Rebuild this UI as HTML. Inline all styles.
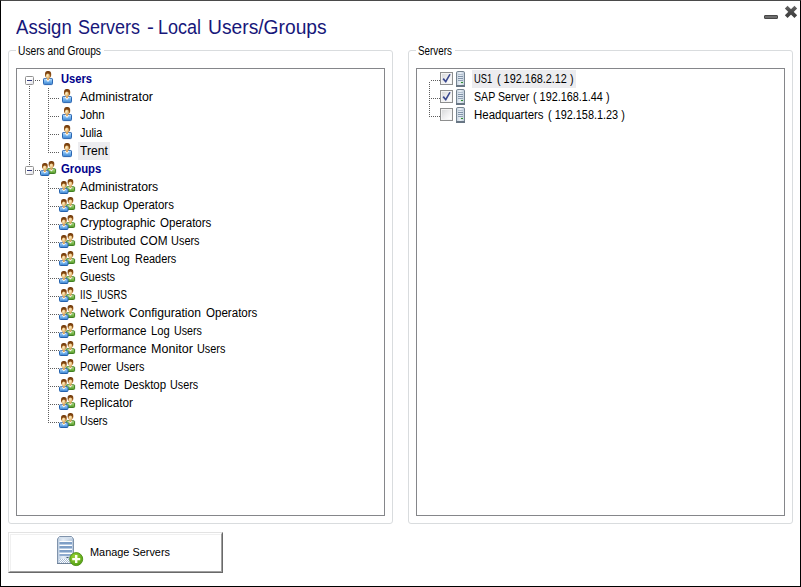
<!DOCTYPE html>
<html><head><meta charset="utf-8"><title>Assign Servers - Local Users/Groups</title>
<style>
html,body{margin:0;padding:0;background:#fff;}
body{width:801px;height:587px;position:relative;overflow:hidden;font-family:"Liberation Sans",sans-serif;}
#win{position:absolute;left:0;top:0;width:799px;height:585px;border:1px solid #000;border-top-color:#4a4a4a;background:#fff;}
.abs{position:absolute;}
.gb{position:absolute;border:1px solid #d9dcde;border-radius:3px;box-sizing:border-box;}
.gl{position:absolute;font-size:12px;line-height:14px;color:#000;white-space:nowrap;}
.tv{position:absolute;border:1px solid #85868a;box-sizing:border-box;background:#fff;}
.t,.gl,#title,#btxt{transform-origin:0 0;}
.t{position:absolute;white-space:nowrap;font-size:12px;line-height:16px;color:#000;}
.t.b{font-weight:bold;color:#00008b;}
.ic{position:absolute;display:block;overflow:visible;}
.hd{position:absolute;height:1px;background-image:linear-gradient(to right,#5c5c5c 1px,transparent 1px);background-size:2px 1px;}
.vd{position:absolute;width:1px;background-image:linear-gradient(to bottom,#5c5c5c 1px,transparent 1px);background-size:1px 2px;}
.sel{position:absolute;background:#ececef;}
.exp{position:absolute;width:7px;height:7px;border:1px solid #919191;border-radius:1.5px;background:linear-gradient(135deg,#fff 0%,#fff 40%,#dfdfe6 100%);}
.exp i{position:absolute;left:1px;top:3px;width:5px;height:1px;background:#323a7c;}
.cb{position:absolute;width:11px;height:11px;border:1px solid #8e8f8f;background:#f4f4f4;}
.cb b{position:absolute;left:1px;top:1px;width:9px;height:9px;background:linear-gradient(135deg,#d9dadb 0%,#eeeeef 50%,#fff 100%);}
#title{position:absolute;left:0;top:15px;font-size:20px;line-height:24px;color:#17177a;white-space:nowrap;}
.tt{position:absolute;top:0;transform-origin:0 0;white-space:nowrap;}
#btn{position:absolute;left:8px;top:532px;width:215px;height:41px;box-sizing:border-box;border:1px solid;border-color:#e3e3e3 #696969 #696969 #e3e3e3;background:#fff;}
#btn .in{position:absolute;left:0;top:0;right:0;bottom:0;border:1px solid;border-color:#fff #a0a0a0 #a0a0a0 #fff;}
#btn .in2{position:absolute;left:1px;top:1px;right:1px;bottom:1px;border:1px solid;border-color:#f0f0f0 #fff #fff #f0f0f0;}
#btxt{position:absolute;left:90px;top:546px;font-size:11px;line-height:13px;color:#000;white-space:nowrap;}
</style></head><body><div id="win"></div>

<div id="title">
<span class="tt" id="T0" style="left:15.5px;transform:scaleX(0.9279);">Assign</span> 
<span class="tt" id="T1" style="left:77.8px;transform:scaleX(0.8998);">Servers</span> 
<span class="tt" id="T2" style="left:146.8px;transform:scaleX(1.0347);">-</span> 
<span class="tt" id="T3" style="left:158.1px;transform:scaleX(0.9016);">Local</span> 
<span class="tt" id="T4" style="left:207.8px;transform:scaleX(0.9621);">Users/Groups</span> 
</div>
<svg class="ic" style="left:760px;top:2px" width="40" height="20" viewBox="0 0 40 20">
<rect x="4.5" y="13.5" width="13" height="3" rx="0.5" fill="#6e6e6e" stroke="#484848" stroke-width="1"/>
<defs><linearGradient id="xg" gradientUnits="userSpaceOnUse" x1="0" y1="3" x2="0" y2="17"><stop offset="0" stop-color="#6c6c6c"/><stop offset="0.5" stop-color="#484848"/><stop offset="1" stop-color="#3e3e3e"/></linearGradient></defs><path d="M26.2 5.1 L35.8 14.7 M35.8 5.1 L26.2 14.7" stroke="url(#xg)" stroke-width="3.8" fill="none"/>
</svg>
<div class="gb" style="left:8px;top:50px;width:385px;height:474px"></div>
<div class="abs" style="left:16px;top:48px;width:88px;height:5px;background:#fff"></div>
<div class="gl" id="gl1" style="left:18px;top:44px;transform:scaleX(0.8522);">Users and Groups</div>
<div class="tv" style="left:16px;top:68px;width:369px;height:448px"></div>
<div class="gb" style="left:408px;top:50px;width:385px;height:474px"></div>
<div class="abs" style="left:416px;top:48px;width:39px;height:5px;background:#fff"></div>
<div class="gl" id="gl2" style="left:418px;top:44px;transform:scaleX(0.8175);">Servers</div>
<div class="tv" style="left:416px;top:68px;width:369px;height:448px"></div>
<div class="vd" style="left:29px;top:86px;height:79px"></div>
<div class="vd" style="left:48px;top:88px;height:65px"></div>
<div class="vd" style="left:48px;top:178px;height:245px"></div>
<div class="exp" style="left:25px;top:76px"><i></i></div>
<div class="hd" style="left:35px;top:80px;width:5px"></div>
<svg class="ic" style="left:40px;top:70px" width="16" height="16" viewBox="0 0 16 16">
<defs><linearGradient id="ub0" x1="0" y1="0" x2="0" y2="1"><stop offset="0" stop-color="#b9dbf9"/><stop offset="0.5" stop-color="#72b2ed"/><stop offset="1" stop-color="#3a80cc"/></linearGradient>
<linearGradient id="uh0" x1="0" y1="0" x2="0" y2="1"><stop offset="0" stop-color="#6e3709"/><stop offset="1" stop-color="#a8641f"/></linearGradient>
<radialGradient id="uf0" cx="0.35" cy="0.35" r="0.75"><stop offset="0" stop-color="#fff3c8"/><stop offset="1" stop-color="#d39a52"/></radialGradient></defs>
<path d="M3.5 9.2 Q3.5 8.5 4.3 8.5 L11.7 8.5 Q12.5 8.5 12.5 9.2 L12.5 13.6 Q12.5 14.6 11.5 14.6 L4.5 14.6 Q3.5 14.6 3.5 13.6 Z" fill="url(#ub0)" stroke="#2b66b2" stroke-width="1"/>
<path d="M5.3 8.7 L10.7 8.7 L8 12 Z" fill="#f7fbff"/>
<path d="M6.9 7 L9.1 7 L9.1 9.4 L8 10.6 L6.9 9.4 Z" fill="#d9a55e"/>
<rect x="5" y="1" width="6.2" height="6.8" rx="2.7" ry="2.9" fill="url(#uh0)"/>
<ellipse cx="7.9" cy="6.2" rx="2.05" ry="2.6" fill="url(#uf0)"/>
</svg>
<span class="t b" id="L0" style="left:61px;top:71px;transform:scaleX(0.9293);">Users</span>
<div class="hd" style="left:50px;top:98px;width:9px"></div>
<svg class="ic" style="left:59px;top:88px" width="16" height="16" viewBox="0 0 16 16">
<defs><linearGradient id="ub1" x1="0" y1="0" x2="0" y2="1"><stop offset="0" stop-color="#b9dbf9"/><stop offset="0.5" stop-color="#72b2ed"/><stop offset="1" stop-color="#3a80cc"/></linearGradient>
<linearGradient id="uh1" x1="0" y1="0" x2="0" y2="1"><stop offset="0" stop-color="#6e3709"/><stop offset="1" stop-color="#a8641f"/></linearGradient>
<radialGradient id="uf1" cx="0.35" cy="0.35" r="0.75"><stop offset="0" stop-color="#fff3c8"/><stop offset="1" stop-color="#d39a52"/></radialGradient></defs>
<path d="M3.5 9.2 Q3.5 8.5 4.3 8.5 L11.7 8.5 Q12.5 8.5 12.5 9.2 L12.5 13.6 Q12.5 14.6 11.5 14.6 L4.5 14.6 Q3.5 14.6 3.5 13.6 Z" fill="url(#ub1)" stroke="#2b66b2" stroke-width="1"/>
<path d="M5.3 8.7 L10.7 8.7 L8 12 Z" fill="#f7fbff"/>
<path d="M6.9 7 L9.1 7 L9.1 9.4 L8 10.6 L6.9 9.4 Z" fill="#d9a55e"/>
<rect x="5" y="1" width="6.2" height="6.8" rx="2.7" ry="2.9" fill="url(#uh1)"/>
<ellipse cx="7.9" cy="6.2" rx="2.05" ry="2.6" fill="url(#uf1)"/>
</svg>
<span class="t " id="L1" style="left:80px;top:89px;transform:scaleX(1.0313);">Administrator</span>
<div class="hd" style="left:50px;top:116px;width:9px"></div>
<svg class="ic" style="left:59px;top:106px" width="16" height="16" viewBox="0 0 16 16">
<defs><linearGradient id="ub2" x1="0" y1="0" x2="0" y2="1"><stop offset="0" stop-color="#b9dbf9"/><stop offset="0.5" stop-color="#72b2ed"/><stop offset="1" stop-color="#3a80cc"/></linearGradient>
<linearGradient id="uh2" x1="0" y1="0" x2="0" y2="1"><stop offset="0" stop-color="#6e3709"/><stop offset="1" stop-color="#a8641f"/></linearGradient>
<radialGradient id="uf2" cx="0.35" cy="0.35" r="0.75"><stop offset="0" stop-color="#fff3c8"/><stop offset="1" stop-color="#d39a52"/></radialGradient></defs>
<path d="M3.5 9.2 Q3.5 8.5 4.3 8.5 L11.7 8.5 Q12.5 8.5 12.5 9.2 L12.5 13.6 Q12.5 14.6 11.5 14.6 L4.5 14.6 Q3.5 14.6 3.5 13.6 Z" fill="url(#ub2)" stroke="#2b66b2" stroke-width="1"/>
<path d="M5.3 8.7 L10.7 8.7 L8 12 Z" fill="#f7fbff"/>
<path d="M6.9 7 L9.1 7 L9.1 9.4 L8 10.6 L6.9 9.4 Z" fill="#d9a55e"/>
<rect x="5" y="1" width="6.2" height="6.8" rx="2.7" ry="2.9" fill="url(#uh2)"/>
<ellipse cx="7.9" cy="6.2" rx="2.05" ry="2.6" fill="url(#uf2)"/>
</svg>
<span class="t " id="L2" style="left:80px;top:107px;transform:scaleX(0.9489);">John</span>
<div class="hd" style="left:50px;top:134px;width:9px"></div>
<svg class="ic" style="left:59px;top:124px" width="16" height="16" viewBox="0 0 16 16">
<defs><linearGradient id="ub3" x1="0" y1="0" x2="0" y2="1"><stop offset="0" stop-color="#b9dbf9"/><stop offset="0.5" stop-color="#72b2ed"/><stop offset="1" stop-color="#3a80cc"/></linearGradient>
<linearGradient id="uh3" x1="0" y1="0" x2="0" y2="1"><stop offset="0" stop-color="#6e3709"/><stop offset="1" stop-color="#a8641f"/></linearGradient>
<radialGradient id="uf3" cx="0.35" cy="0.35" r="0.75"><stop offset="0" stop-color="#fff3c8"/><stop offset="1" stop-color="#d39a52"/></radialGradient></defs>
<path d="M3.5 9.2 Q3.5 8.5 4.3 8.5 L11.7 8.5 Q12.5 8.5 12.5 9.2 L12.5 13.6 Q12.5 14.6 11.5 14.6 L4.5 14.6 Q3.5 14.6 3.5 13.6 Z" fill="url(#ub3)" stroke="#2b66b2" stroke-width="1"/>
<path d="M5.3 8.7 L10.7 8.7 L8 12 Z" fill="#f7fbff"/>
<path d="M6.9 7 L9.1 7 L9.1 9.4 L8 10.6 L6.9 9.4 Z" fill="#d9a55e"/>
<rect x="5" y="1" width="6.2" height="6.8" rx="2.7" ry="2.9" fill="url(#uh3)"/>
<ellipse cx="7.9" cy="6.2" rx="2.05" ry="2.6" fill="url(#uf3)"/>
</svg>
<span class="t " id="L3" style="left:80px;top:125px;transform:scaleX(0.9033);">Julia</span>
<div class="hd" style="left:50px;top:152px;width:9px"></div>
<svg class="ic" style="left:59px;top:142px" width="16" height="16" viewBox="0 0 16 16">
<defs><linearGradient id="ub4" x1="0" y1="0" x2="0" y2="1"><stop offset="0" stop-color="#b9dbf9"/><stop offset="0.5" stop-color="#72b2ed"/><stop offset="1" stop-color="#3a80cc"/></linearGradient>
<linearGradient id="uh4" x1="0" y1="0" x2="0" y2="1"><stop offset="0" stop-color="#6e3709"/><stop offset="1" stop-color="#a8641f"/></linearGradient>
<radialGradient id="uf4" cx="0.35" cy="0.35" r="0.75"><stop offset="0" stop-color="#fff3c8"/><stop offset="1" stop-color="#d39a52"/></radialGradient></defs>
<path d="M3.5 9.2 Q3.5 8.5 4.3 8.5 L11.7 8.5 Q12.5 8.5 12.5 9.2 L12.5 13.6 Q12.5 14.6 11.5 14.6 L4.5 14.6 Q3.5 14.6 3.5 13.6 Z" fill="url(#ub4)" stroke="#2b66b2" stroke-width="1"/>
<path d="M5.3 8.7 L10.7 8.7 L8 12 Z" fill="#f7fbff"/>
<path d="M6.9 7 L9.1 7 L9.1 9.4 L8 10.6 L6.9 9.4 Z" fill="#d9a55e"/>
<rect x="5" y="1" width="6.2" height="6.8" rx="2.7" ry="2.9" fill="url(#uh4)"/>
<ellipse cx="7.9" cy="6.2" rx="2.05" ry="2.6" fill="url(#uf4)"/>
</svg>
<div class="sel" style="left:78px;top:142px;width:32px;height:18px"></div>
<span class="t " id="L4" style="left:80px;top:143px;transform:scaleX(1.0086);">Trent</span>
<div class="exp" style="left:25px;top:166px"><i></i></div>
<div class="hd" style="left:35px;top:170px;width:5px"></div>
<svg class="ic" style="left:40px;top:160px" width="16" height="16" viewBox="0 0 16 16">
<defs><linearGradient id="gb5" x1="0" y1="0" x2="0" y2="1"><stop offset="0" stop-color="#b9dbf9"/><stop offset="0.5" stop-color="#72b2ed"/><stop offset="1" stop-color="#3a80cc"/></linearGradient>
<linearGradient id="gg5" x1="0" y1="0" x2="0" y2="1"><stop offset="0" stop-color="#b4dc8a"/><stop offset="0.55" stop-color="#7dba4c"/><stop offset="1" stop-color="#4d8f26"/></linearGradient>
<linearGradient id="gh5" x1="0" y1="0" x2="0" y2="1"><stop offset="0" stop-color="#6e3709"/><stop offset="1" stop-color="#a8641f"/></linearGradient>
<radialGradient id="gf5" cx="0.4" cy="0.35" r="0.7"><stop offset="0" stop-color="#fdeec0"/><stop offset="1" stop-color="#d9a45c"/></radialGradient></defs>
<g transform="translate(6.6 1.0)">
<path d="M0.5 8.5 Q0.5 7.8 1.3 7.8 L8.2 7.8 Q9 7.8 9 8.5 L9 11.5 Q9 12.5 8 12.5 L1.5 12.5 Q0.5 12.5 0.5 11.5 Z" fill="url(#gg5)" stroke="#3f7f22" stroke-width="1"/>
<path d="M2.5 7.9 L7.1 7.9 L4.8 10.4 Z" fill="#f6fbff"/>
<path d="M3.8 5.6 L5.8 5.6 L5.8 8.3 L4.8 9.3 L3.8 8.3 Z" fill="#d9a55e"/>
<rect x="2" y="0" width="5.7" height="6.2" rx="2.5" ry="2.7" fill="url(#gh5)"/>
<ellipse cx="4.8" cy="5.0" rx="1.95" ry="2.6" fill="url(#gf5)"/>
</g>
<g transform="translate(0.0 3.0)">
<path d="M0.5 8.5 Q0.5 7.8 1.3 7.8 L8.2 7.8 Q9 7.8 9 8.5 L9 11.5 Q9 12.5 8 12.5 L1.5 12.5 Q0.5 12.5 0.5 11.5 Z" fill="url(#gb5)" stroke="#2562ae" stroke-width="1"/>
<path d="M2.5 7.9 L7.1 7.9 L4.8 10.4 Z" fill="#f6fbff"/>
<path d="M3.8 5.6 L5.8 5.6 L5.8 8.3 L4.8 9.3 L3.8 8.3 Z" fill="#d9a55e"/>
<rect x="2" y="0" width="5.7" height="6.2" rx="2.5" ry="2.7" fill="url(#gh5)"/>
<ellipse cx="4.8" cy="5.0" rx="1.95" ry="2.6" fill="url(#gf5)"/>
</g>
</svg>
<span class="t b" id="L5" style="left:61px;top:161px;transform:scaleX(0.9444);">Groups</span>
<div class="hd" style="left:50px;top:188px;width:9px"></div>
<svg class="ic" style="left:59px;top:178px" width="16" height="16" viewBox="0 0 16 16">
<defs><linearGradient id="gb6" x1="0" y1="0" x2="0" y2="1"><stop offset="0" stop-color="#b9dbf9"/><stop offset="0.5" stop-color="#72b2ed"/><stop offset="1" stop-color="#3a80cc"/></linearGradient>
<linearGradient id="gg6" x1="0" y1="0" x2="0" y2="1"><stop offset="0" stop-color="#b4dc8a"/><stop offset="0.55" stop-color="#7dba4c"/><stop offset="1" stop-color="#4d8f26"/></linearGradient>
<linearGradient id="gh6" x1="0" y1="0" x2="0" y2="1"><stop offset="0" stop-color="#6e3709"/><stop offset="1" stop-color="#a8641f"/></linearGradient>
<radialGradient id="gf6" cx="0.4" cy="0.35" r="0.7"><stop offset="0" stop-color="#fdeec0"/><stop offset="1" stop-color="#d9a45c"/></radialGradient></defs>
<g transform="translate(6.6 1.0)">
<path d="M0.5 8.5 Q0.5 7.8 1.3 7.8 L8.2 7.8 Q9 7.8 9 8.5 L9 11.5 Q9 12.5 8 12.5 L1.5 12.5 Q0.5 12.5 0.5 11.5 Z" fill="url(#gg6)" stroke="#3f7f22" stroke-width="1"/>
<path d="M2.5 7.9 L7.1 7.9 L4.8 10.4 Z" fill="#f6fbff"/>
<path d="M3.8 5.6 L5.8 5.6 L5.8 8.3 L4.8 9.3 L3.8 8.3 Z" fill="#d9a55e"/>
<rect x="2" y="0" width="5.7" height="6.2" rx="2.5" ry="2.7" fill="url(#gh6)"/>
<ellipse cx="4.8" cy="5.0" rx="1.95" ry="2.6" fill="url(#gf6)"/>
</g>
<g transform="translate(0.0 3.0)">
<path d="M0.5 8.5 Q0.5 7.8 1.3 7.8 L8.2 7.8 Q9 7.8 9 8.5 L9 11.5 Q9 12.5 8 12.5 L1.5 12.5 Q0.5 12.5 0.5 11.5 Z" fill="url(#gb6)" stroke="#2562ae" stroke-width="1"/>
<path d="M2.5 7.9 L7.1 7.9 L4.8 10.4 Z" fill="#f6fbff"/>
<path d="M3.8 5.6 L5.8 5.6 L5.8 8.3 L4.8 9.3 L3.8 8.3 Z" fill="#d9a55e"/>
<rect x="2" y="0" width="5.7" height="6.2" rx="2.5" ry="2.7" fill="url(#gh6)"/>
<ellipse cx="4.8" cy="5.0" rx="1.95" ry="2.6" fill="url(#gf6)"/>
</g>
</svg>
<span class="t " id="L6" style="left:80px;top:179px;transform:scaleX(1.0197);">Administrators</span>
<div class="hd" style="left:50px;top:206px;width:9px"></div>
<svg class="ic" style="left:59px;top:196px" width="16" height="16" viewBox="0 0 16 16">
<defs><linearGradient id="gb7" x1="0" y1="0" x2="0" y2="1"><stop offset="0" stop-color="#b9dbf9"/><stop offset="0.5" stop-color="#72b2ed"/><stop offset="1" stop-color="#3a80cc"/></linearGradient>
<linearGradient id="gg7" x1="0" y1="0" x2="0" y2="1"><stop offset="0" stop-color="#b4dc8a"/><stop offset="0.55" stop-color="#7dba4c"/><stop offset="1" stop-color="#4d8f26"/></linearGradient>
<linearGradient id="gh7" x1="0" y1="0" x2="0" y2="1"><stop offset="0" stop-color="#6e3709"/><stop offset="1" stop-color="#a8641f"/></linearGradient>
<radialGradient id="gf7" cx="0.4" cy="0.35" r="0.7"><stop offset="0" stop-color="#fdeec0"/><stop offset="1" stop-color="#d9a45c"/></radialGradient></defs>
<g transform="translate(6.6 1.0)">
<path d="M0.5 8.5 Q0.5 7.8 1.3 7.8 L8.2 7.8 Q9 7.8 9 8.5 L9 11.5 Q9 12.5 8 12.5 L1.5 12.5 Q0.5 12.5 0.5 11.5 Z" fill="url(#gg7)" stroke="#3f7f22" stroke-width="1"/>
<path d="M2.5 7.9 L7.1 7.9 L4.8 10.4 Z" fill="#f6fbff"/>
<path d="M3.8 5.6 L5.8 5.6 L5.8 8.3 L4.8 9.3 L3.8 8.3 Z" fill="#d9a55e"/>
<rect x="2" y="0" width="5.7" height="6.2" rx="2.5" ry="2.7" fill="url(#gh7)"/>
<ellipse cx="4.8" cy="5.0" rx="1.95" ry="2.6" fill="url(#gf7)"/>
</g>
<g transform="translate(0.0 3.0)">
<path d="M0.5 8.5 Q0.5 7.8 1.3 7.8 L8.2 7.8 Q9 7.8 9 8.5 L9 11.5 Q9 12.5 8 12.5 L1.5 12.5 Q0.5 12.5 0.5 11.5 Z" fill="url(#gb7)" stroke="#2562ae" stroke-width="1"/>
<path d="M2.5 7.9 L7.1 7.9 L4.8 10.4 Z" fill="#f6fbff"/>
<path d="M3.8 5.6 L5.8 5.6 L5.8 8.3 L4.8 9.3 L3.8 8.3 Z" fill="#d9a55e"/>
<rect x="2" y="0" width="5.7" height="6.2" rx="2.5" ry="2.7" fill="url(#gh7)"/>
<ellipse cx="4.8" cy="5.0" rx="1.95" ry="2.6" fill="url(#gf7)"/>
</g>
</svg>
<span class="t " id="L7_0" style="left:80px;top:197px;transform:scaleX(0.9642);">Backup</span>
<span class="t " id="L7_1" style="left:123.2px;top:197px;transform:scaleX(0.9541);">Operators</span>
<div class="hd" style="left:50px;top:224px;width:9px"></div>
<svg class="ic" style="left:59px;top:214px" width="16" height="16" viewBox="0 0 16 16">
<defs><linearGradient id="gb8" x1="0" y1="0" x2="0" y2="1"><stop offset="0" stop-color="#b9dbf9"/><stop offset="0.5" stop-color="#72b2ed"/><stop offset="1" stop-color="#3a80cc"/></linearGradient>
<linearGradient id="gg8" x1="0" y1="0" x2="0" y2="1"><stop offset="0" stop-color="#b4dc8a"/><stop offset="0.55" stop-color="#7dba4c"/><stop offset="1" stop-color="#4d8f26"/></linearGradient>
<linearGradient id="gh8" x1="0" y1="0" x2="0" y2="1"><stop offset="0" stop-color="#6e3709"/><stop offset="1" stop-color="#a8641f"/></linearGradient>
<radialGradient id="gf8" cx="0.4" cy="0.35" r="0.7"><stop offset="0" stop-color="#fdeec0"/><stop offset="1" stop-color="#d9a45c"/></radialGradient></defs>
<g transform="translate(6.6 1.0)">
<path d="M0.5 8.5 Q0.5 7.8 1.3 7.8 L8.2 7.8 Q9 7.8 9 8.5 L9 11.5 Q9 12.5 8 12.5 L1.5 12.5 Q0.5 12.5 0.5 11.5 Z" fill="url(#gg8)" stroke="#3f7f22" stroke-width="1"/>
<path d="M2.5 7.9 L7.1 7.9 L4.8 10.4 Z" fill="#f6fbff"/>
<path d="M3.8 5.6 L5.8 5.6 L5.8 8.3 L4.8 9.3 L3.8 8.3 Z" fill="#d9a55e"/>
<rect x="2" y="0" width="5.7" height="6.2" rx="2.5" ry="2.7" fill="url(#gh8)"/>
<ellipse cx="4.8" cy="5.0" rx="1.95" ry="2.6" fill="url(#gf8)"/>
</g>
<g transform="translate(0.0 3.0)">
<path d="M0.5 8.5 Q0.5 7.8 1.3 7.8 L8.2 7.8 Q9 7.8 9 8.5 L9 11.5 Q9 12.5 8 12.5 L1.5 12.5 Q0.5 12.5 0.5 11.5 Z" fill="url(#gb8)" stroke="#2562ae" stroke-width="1"/>
<path d="M2.5 7.9 L7.1 7.9 L4.8 10.4 Z" fill="#f6fbff"/>
<path d="M3.8 5.6 L5.8 5.6 L5.8 8.3 L4.8 9.3 L3.8 8.3 Z" fill="#d9a55e"/>
<rect x="2" y="0" width="5.7" height="6.2" rx="2.5" ry="2.7" fill="url(#gh8)"/>
<ellipse cx="4.8" cy="5.0" rx="1.95" ry="2.6" fill="url(#gf8)"/>
</g>
</svg>
<span class="t " id="L8_0" style="left:80px;top:215px;transform:scaleX(1.0093);">Cryptographic</span>
<span class="t " id="L8_1" style="left:159.8px;top:215px;transform:scaleX(0.9633);">Operators</span>
<div class="hd" style="left:50px;top:242px;width:9px"></div>
<svg class="ic" style="left:59px;top:232px" width="16" height="16" viewBox="0 0 16 16">
<defs><linearGradient id="gb9" x1="0" y1="0" x2="0" y2="1"><stop offset="0" stop-color="#b9dbf9"/><stop offset="0.5" stop-color="#72b2ed"/><stop offset="1" stop-color="#3a80cc"/></linearGradient>
<linearGradient id="gg9" x1="0" y1="0" x2="0" y2="1"><stop offset="0" stop-color="#b4dc8a"/><stop offset="0.55" stop-color="#7dba4c"/><stop offset="1" stop-color="#4d8f26"/></linearGradient>
<linearGradient id="gh9" x1="0" y1="0" x2="0" y2="1"><stop offset="0" stop-color="#6e3709"/><stop offset="1" stop-color="#a8641f"/></linearGradient>
<radialGradient id="gf9" cx="0.4" cy="0.35" r="0.7"><stop offset="0" stop-color="#fdeec0"/><stop offset="1" stop-color="#d9a45c"/></radialGradient></defs>
<g transform="translate(6.6 1.0)">
<path d="M0.5 8.5 Q0.5 7.8 1.3 7.8 L8.2 7.8 Q9 7.8 9 8.5 L9 11.5 Q9 12.5 8 12.5 L1.5 12.5 Q0.5 12.5 0.5 11.5 Z" fill="url(#gg9)" stroke="#3f7f22" stroke-width="1"/>
<path d="M2.5 7.9 L7.1 7.9 L4.8 10.4 Z" fill="#f6fbff"/>
<path d="M3.8 5.6 L5.8 5.6 L5.8 8.3 L4.8 9.3 L3.8 8.3 Z" fill="#d9a55e"/>
<rect x="2" y="0" width="5.7" height="6.2" rx="2.5" ry="2.7" fill="url(#gh9)"/>
<ellipse cx="4.8" cy="5.0" rx="1.95" ry="2.6" fill="url(#gf9)"/>
</g>
<g transform="translate(0.0 3.0)">
<path d="M0.5 8.5 Q0.5 7.8 1.3 7.8 L8.2 7.8 Q9 7.8 9 8.5 L9 11.5 Q9 12.5 8 12.5 L1.5 12.5 Q0.5 12.5 0.5 11.5 Z" fill="url(#gb9)" stroke="#2562ae" stroke-width="1"/>
<path d="M2.5 7.9 L7.1 7.9 L4.8 10.4 Z" fill="#f6fbff"/>
<path d="M3.8 5.6 L5.8 5.6 L5.8 8.3 L4.8 9.3 L3.8 8.3 Z" fill="#d9a55e"/>
<rect x="2" y="0" width="5.7" height="6.2" rx="2.5" ry="2.7" fill="url(#gh9)"/>
<ellipse cx="4.8" cy="5.0" rx="1.95" ry="2.6" fill="url(#gf9)"/>
</g>
</svg>
<span class="t " id="L9_0" style="left:80px;top:233px;transform:scaleX(0.9693);">Distributed</span>
<span class="t " id="L9_1" style="left:139.7px;top:233px;transform:scaleX(0.9826);">COM</span>
<span class="t " id="L9_2" style="left:171.0px;top:233px;transform:scaleX(0.9125);">Users</span>
<div class="hd" style="left:50px;top:260px;width:9px"></div>
<svg class="ic" style="left:59px;top:250px" width="16" height="16" viewBox="0 0 16 16">
<defs><linearGradient id="gb10" x1="0" y1="0" x2="0" y2="1"><stop offset="0" stop-color="#b9dbf9"/><stop offset="0.5" stop-color="#72b2ed"/><stop offset="1" stop-color="#3a80cc"/></linearGradient>
<linearGradient id="gg10" x1="0" y1="0" x2="0" y2="1"><stop offset="0" stop-color="#b4dc8a"/><stop offset="0.55" stop-color="#7dba4c"/><stop offset="1" stop-color="#4d8f26"/></linearGradient>
<linearGradient id="gh10" x1="0" y1="0" x2="0" y2="1"><stop offset="0" stop-color="#6e3709"/><stop offset="1" stop-color="#a8641f"/></linearGradient>
<radialGradient id="gf10" cx="0.4" cy="0.35" r="0.7"><stop offset="0" stop-color="#fdeec0"/><stop offset="1" stop-color="#d9a45c"/></radialGradient></defs>
<g transform="translate(6.6 1.0)">
<path d="M0.5 8.5 Q0.5 7.8 1.3 7.8 L8.2 7.8 Q9 7.8 9 8.5 L9 11.5 Q9 12.5 8 12.5 L1.5 12.5 Q0.5 12.5 0.5 11.5 Z" fill="url(#gg10)" stroke="#3f7f22" stroke-width="1"/>
<path d="M2.5 7.9 L7.1 7.9 L4.8 10.4 Z" fill="#f6fbff"/>
<path d="M3.8 5.6 L5.8 5.6 L5.8 8.3 L4.8 9.3 L3.8 8.3 Z" fill="#d9a55e"/>
<rect x="2" y="0" width="5.7" height="6.2" rx="2.5" ry="2.7" fill="url(#gh10)"/>
<ellipse cx="4.8" cy="5.0" rx="1.95" ry="2.6" fill="url(#gf10)"/>
</g>
<g transform="translate(0.0 3.0)">
<path d="M0.5 8.5 Q0.5 7.8 1.3 7.8 L8.2 7.8 Q9 7.8 9 8.5 L9 11.5 Q9 12.5 8 12.5 L1.5 12.5 Q0.5 12.5 0.5 11.5 Z" fill="url(#gb10)" stroke="#2562ae" stroke-width="1"/>
<path d="M2.5 7.9 L7.1 7.9 L4.8 10.4 Z" fill="#f6fbff"/>
<path d="M3.8 5.6 L5.8 5.6 L5.8 8.3 L4.8 9.3 L3.8 8.3 Z" fill="#d9a55e"/>
<rect x="2" y="0" width="5.7" height="6.2" rx="2.5" ry="2.7" fill="url(#gh10)"/>
<ellipse cx="4.8" cy="5.0" rx="1.95" ry="2.6" fill="url(#gf10)"/>
</g>
</svg>
<span class="t " id="L10_0" style="left:80px;top:251px;transform:scaleX(0.8929);">Event</span>
<span class="t " id="L10_1" style="left:111.4px;top:251px;transform:scaleX(0.9390);">Log</span>
<span class="t " id="L10_2" style="left:134.7px;top:251px;transform:scaleX(0.9108);">Readers</span>
<div class="hd" style="left:50px;top:278px;width:9px"></div>
<svg class="ic" style="left:59px;top:268px" width="16" height="16" viewBox="0 0 16 16">
<defs><linearGradient id="gb11" x1="0" y1="0" x2="0" y2="1"><stop offset="0" stop-color="#b9dbf9"/><stop offset="0.5" stop-color="#72b2ed"/><stop offset="1" stop-color="#3a80cc"/></linearGradient>
<linearGradient id="gg11" x1="0" y1="0" x2="0" y2="1"><stop offset="0" stop-color="#b4dc8a"/><stop offset="0.55" stop-color="#7dba4c"/><stop offset="1" stop-color="#4d8f26"/></linearGradient>
<linearGradient id="gh11" x1="0" y1="0" x2="0" y2="1"><stop offset="0" stop-color="#6e3709"/><stop offset="1" stop-color="#a8641f"/></linearGradient>
<radialGradient id="gf11" cx="0.4" cy="0.35" r="0.7"><stop offset="0" stop-color="#fdeec0"/><stop offset="1" stop-color="#d9a45c"/></radialGradient></defs>
<g transform="translate(6.6 1.0)">
<path d="M0.5 8.5 Q0.5 7.8 1.3 7.8 L8.2 7.8 Q9 7.8 9 8.5 L9 11.5 Q9 12.5 8 12.5 L1.5 12.5 Q0.5 12.5 0.5 11.5 Z" fill="url(#gg11)" stroke="#3f7f22" stroke-width="1"/>
<path d="M2.5 7.9 L7.1 7.9 L4.8 10.4 Z" fill="#f6fbff"/>
<path d="M3.8 5.6 L5.8 5.6 L5.8 8.3 L4.8 9.3 L3.8 8.3 Z" fill="#d9a55e"/>
<rect x="2" y="0" width="5.7" height="6.2" rx="2.5" ry="2.7" fill="url(#gh11)"/>
<ellipse cx="4.8" cy="5.0" rx="1.95" ry="2.6" fill="url(#gf11)"/>
</g>
<g transform="translate(0.0 3.0)">
<path d="M0.5 8.5 Q0.5 7.8 1.3 7.8 L8.2 7.8 Q9 7.8 9 8.5 L9 11.5 Q9 12.5 8 12.5 L1.5 12.5 Q0.5 12.5 0.5 11.5 Z" fill="url(#gb11)" stroke="#2562ae" stroke-width="1"/>
<path d="M2.5 7.9 L7.1 7.9 L4.8 10.4 Z" fill="#f6fbff"/>
<path d="M3.8 5.6 L5.8 5.6 L5.8 8.3 L4.8 9.3 L3.8 8.3 Z" fill="#d9a55e"/>
<rect x="2" y="0" width="5.7" height="6.2" rx="2.5" ry="2.7" fill="url(#gh11)"/>
<ellipse cx="4.8" cy="5.0" rx="1.95" ry="2.6" fill="url(#gf11)"/>
</g>
</svg>
<span class="t " id="L11" style="left:80px;top:269px;transform:scaleX(0.9207);">Guests</span>
<div class="hd" style="left:50px;top:296px;width:9px"></div>
<svg class="ic" style="left:59px;top:286px" width="16" height="16" viewBox="0 0 16 16">
<defs><linearGradient id="gb12" x1="0" y1="0" x2="0" y2="1"><stop offset="0" stop-color="#b9dbf9"/><stop offset="0.5" stop-color="#72b2ed"/><stop offset="1" stop-color="#3a80cc"/></linearGradient>
<linearGradient id="gg12" x1="0" y1="0" x2="0" y2="1"><stop offset="0" stop-color="#b4dc8a"/><stop offset="0.55" stop-color="#7dba4c"/><stop offset="1" stop-color="#4d8f26"/></linearGradient>
<linearGradient id="gh12" x1="0" y1="0" x2="0" y2="1"><stop offset="0" stop-color="#6e3709"/><stop offset="1" stop-color="#a8641f"/></linearGradient>
<radialGradient id="gf12" cx="0.4" cy="0.35" r="0.7"><stop offset="0" stop-color="#fdeec0"/><stop offset="1" stop-color="#d9a45c"/></radialGradient></defs>
<g transform="translate(6.6 1.0)">
<path d="M0.5 8.5 Q0.5 7.8 1.3 7.8 L8.2 7.8 Q9 7.8 9 8.5 L9 11.5 Q9 12.5 8 12.5 L1.5 12.5 Q0.5 12.5 0.5 11.5 Z" fill="url(#gg12)" stroke="#3f7f22" stroke-width="1"/>
<path d="M2.5 7.9 L7.1 7.9 L4.8 10.4 Z" fill="#f6fbff"/>
<path d="M3.8 5.6 L5.8 5.6 L5.8 8.3 L4.8 9.3 L3.8 8.3 Z" fill="#d9a55e"/>
<rect x="2" y="0" width="5.7" height="6.2" rx="2.5" ry="2.7" fill="url(#gh12)"/>
<ellipse cx="4.8" cy="5.0" rx="1.95" ry="2.6" fill="url(#gf12)"/>
</g>
<g transform="translate(0.0 3.0)">
<path d="M0.5 8.5 Q0.5 7.8 1.3 7.8 L8.2 7.8 Q9 7.8 9 8.5 L9 11.5 Q9 12.5 8 12.5 L1.5 12.5 Q0.5 12.5 0.5 11.5 Z" fill="url(#gb12)" stroke="#2562ae" stroke-width="1"/>
<path d="M2.5 7.9 L7.1 7.9 L4.8 10.4 Z" fill="#f6fbff"/>
<path d="M3.8 5.6 L5.8 5.6 L5.8 8.3 L4.8 9.3 L3.8 8.3 Z" fill="#d9a55e"/>
<rect x="2" y="0" width="5.7" height="6.2" rx="2.5" ry="2.7" fill="url(#gh12)"/>
<ellipse cx="4.8" cy="5.0" rx="1.95" ry="2.6" fill="url(#gf12)"/>
</g>
</svg>
<span class="t " id="L12" style="left:80px;top:287px;transform:scaleX(0.8082);">IIS_IUSRS</span>
<div class="hd" style="left:50px;top:314px;width:9px"></div>
<svg class="ic" style="left:59px;top:304px" width="16" height="16" viewBox="0 0 16 16">
<defs><linearGradient id="gb13" x1="0" y1="0" x2="0" y2="1"><stop offset="0" stop-color="#b9dbf9"/><stop offset="0.5" stop-color="#72b2ed"/><stop offset="1" stop-color="#3a80cc"/></linearGradient>
<linearGradient id="gg13" x1="0" y1="0" x2="0" y2="1"><stop offset="0" stop-color="#b4dc8a"/><stop offset="0.55" stop-color="#7dba4c"/><stop offset="1" stop-color="#4d8f26"/></linearGradient>
<linearGradient id="gh13" x1="0" y1="0" x2="0" y2="1"><stop offset="0" stop-color="#6e3709"/><stop offset="1" stop-color="#a8641f"/></linearGradient>
<radialGradient id="gf13" cx="0.4" cy="0.35" r="0.7"><stop offset="0" stop-color="#fdeec0"/><stop offset="1" stop-color="#d9a45c"/></radialGradient></defs>
<g transform="translate(6.6 1.0)">
<path d="M0.5 8.5 Q0.5 7.8 1.3 7.8 L8.2 7.8 Q9 7.8 9 8.5 L9 11.5 Q9 12.5 8 12.5 L1.5 12.5 Q0.5 12.5 0.5 11.5 Z" fill="url(#gg13)" stroke="#3f7f22" stroke-width="1"/>
<path d="M2.5 7.9 L7.1 7.9 L4.8 10.4 Z" fill="#f6fbff"/>
<path d="M3.8 5.6 L5.8 5.6 L5.8 8.3 L4.8 9.3 L3.8 8.3 Z" fill="#d9a55e"/>
<rect x="2" y="0" width="5.7" height="6.2" rx="2.5" ry="2.7" fill="url(#gh13)"/>
<ellipse cx="4.8" cy="5.0" rx="1.95" ry="2.6" fill="url(#gf13)"/>
</g>
<g transform="translate(0.0 3.0)">
<path d="M0.5 8.5 Q0.5 7.8 1.3 7.8 L8.2 7.8 Q9 7.8 9 8.5 L9 11.5 Q9 12.5 8 12.5 L1.5 12.5 Q0.5 12.5 0.5 11.5 Z" fill="url(#gb13)" stroke="#2562ae" stroke-width="1"/>
<path d="M2.5 7.9 L7.1 7.9 L4.8 10.4 Z" fill="#f6fbff"/>
<path d="M3.8 5.6 L5.8 5.6 L5.8 8.3 L4.8 9.3 L3.8 8.3 Z" fill="#d9a55e"/>
<rect x="2" y="0" width="5.7" height="6.2" rx="2.5" ry="2.7" fill="url(#gh13)"/>
<ellipse cx="4.8" cy="5.0" rx="1.95" ry="2.6" fill="url(#gf13)"/>
</g>
</svg>
<span class="t " id="L13_0" style="left:80px;top:305px;transform:scaleX(1.0155);">Network</span>
<span class="t " id="L13_1" style="left:129.0px;top:305px;transform:scaleX(1.0085);">Configuration</span>
<span class="t " id="L13_2" style="left:205.6px;top:305px;transform:scaleX(0.9634);">Operators</span>
<div class="hd" style="left:50px;top:332px;width:9px"></div>
<svg class="ic" style="left:59px;top:322px" width="16" height="16" viewBox="0 0 16 16">
<defs><linearGradient id="gb14" x1="0" y1="0" x2="0" y2="1"><stop offset="0" stop-color="#b9dbf9"/><stop offset="0.5" stop-color="#72b2ed"/><stop offset="1" stop-color="#3a80cc"/></linearGradient>
<linearGradient id="gg14" x1="0" y1="0" x2="0" y2="1"><stop offset="0" stop-color="#b4dc8a"/><stop offset="0.55" stop-color="#7dba4c"/><stop offset="1" stop-color="#4d8f26"/></linearGradient>
<linearGradient id="gh14" x1="0" y1="0" x2="0" y2="1"><stop offset="0" stop-color="#6e3709"/><stop offset="1" stop-color="#a8641f"/></linearGradient>
<radialGradient id="gf14" cx="0.4" cy="0.35" r="0.7"><stop offset="0" stop-color="#fdeec0"/><stop offset="1" stop-color="#d9a45c"/></radialGradient></defs>
<g transform="translate(6.6 1.0)">
<path d="M0.5 8.5 Q0.5 7.8 1.3 7.8 L8.2 7.8 Q9 7.8 9 8.5 L9 11.5 Q9 12.5 8 12.5 L1.5 12.5 Q0.5 12.5 0.5 11.5 Z" fill="url(#gg14)" stroke="#3f7f22" stroke-width="1"/>
<path d="M2.5 7.9 L7.1 7.9 L4.8 10.4 Z" fill="#f6fbff"/>
<path d="M3.8 5.6 L5.8 5.6 L5.8 8.3 L4.8 9.3 L3.8 8.3 Z" fill="#d9a55e"/>
<rect x="2" y="0" width="5.7" height="6.2" rx="2.5" ry="2.7" fill="url(#gh14)"/>
<ellipse cx="4.8" cy="5.0" rx="1.95" ry="2.6" fill="url(#gf14)"/>
</g>
<g transform="translate(0.0 3.0)">
<path d="M0.5 8.5 Q0.5 7.8 1.3 7.8 L8.2 7.8 Q9 7.8 9 8.5 L9 11.5 Q9 12.5 8 12.5 L1.5 12.5 Q0.5 12.5 0.5 11.5 Z" fill="url(#gb14)" stroke="#2562ae" stroke-width="1"/>
<path d="M2.5 7.9 L7.1 7.9 L4.8 10.4 Z" fill="#f6fbff"/>
<path d="M3.8 5.6 L5.8 5.6 L5.8 8.3 L4.8 9.3 L3.8 8.3 Z" fill="#d9a55e"/>
<rect x="2" y="0" width="5.7" height="6.2" rx="2.5" ry="2.7" fill="url(#gh14)"/>
<ellipse cx="4.8" cy="5.0" rx="1.95" ry="2.6" fill="url(#gf14)"/>
</g>
</svg>
<span class="t " id="L14_0" style="left:80px;top:323px;transform:scaleX(0.9694);">Performance</span>
<span class="t " id="L14_1" style="left:150.7px;top:323px;transform:scaleX(0.9342);">Log</span>
<span class="t " id="L14_2" style="left:173.7px;top:323px;transform:scaleX(0.8905);">Users</span>
<div class="hd" style="left:50px;top:350px;width:9px"></div>
<svg class="ic" style="left:59px;top:340px" width="16" height="16" viewBox="0 0 16 16">
<defs><linearGradient id="gb15" x1="0" y1="0" x2="0" y2="1"><stop offset="0" stop-color="#b9dbf9"/><stop offset="0.5" stop-color="#72b2ed"/><stop offset="1" stop-color="#3a80cc"/></linearGradient>
<linearGradient id="gg15" x1="0" y1="0" x2="0" y2="1"><stop offset="0" stop-color="#b4dc8a"/><stop offset="0.55" stop-color="#7dba4c"/><stop offset="1" stop-color="#4d8f26"/></linearGradient>
<linearGradient id="gh15" x1="0" y1="0" x2="0" y2="1"><stop offset="0" stop-color="#6e3709"/><stop offset="1" stop-color="#a8641f"/></linearGradient>
<radialGradient id="gf15" cx="0.4" cy="0.35" r="0.7"><stop offset="0" stop-color="#fdeec0"/><stop offset="1" stop-color="#d9a45c"/></radialGradient></defs>
<g transform="translate(6.6 1.0)">
<path d="M0.5 8.5 Q0.5 7.8 1.3 7.8 L8.2 7.8 Q9 7.8 9 8.5 L9 11.5 Q9 12.5 8 12.5 L1.5 12.5 Q0.5 12.5 0.5 11.5 Z" fill="url(#gg15)" stroke="#3f7f22" stroke-width="1"/>
<path d="M2.5 7.9 L7.1 7.9 L4.8 10.4 Z" fill="#f6fbff"/>
<path d="M3.8 5.6 L5.8 5.6 L5.8 8.3 L4.8 9.3 L3.8 8.3 Z" fill="#d9a55e"/>
<rect x="2" y="0" width="5.7" height="6.2" rx="2.5" ry="2.7" fill="url(#gh15)"/>
<ellipse cx="4.8" cy="5.0" rx="1.95" ry="2.6" fill="url(#gf15)"/>
</g>
<g transform="translate(0.0 3.0)">
<path d="M0.5 8.5 Q0.5 7.8 1.3 7.8 L8.2 7.8 Q9 7.8 9 8.5 L9 11.5 Q9 12.5 8 12.5 L1.5 12.5 Q0.5 12.5 0.5 11.5 Z" fill="url(#gb15)" stroke="#2562ae" stroke-width="1"/>
<path d="M2.5 7.9 L7.1 7.9 L4.8 10.4 Z" fill="#f6fbff"/>
<path d="M3.8 5.6 L5.8 5.6 L5.8 8.3 L4.8 9.3 L3.8 8.3 Z" fill="#d9a55e"/>
<rect x="2" y="0" width="5.7" height="6.2" rx="2.5" ry="2.7" fill="url(#gh15)"/>
<ellipse cx="4.8" cy="5.0" rx="1.95" ry="2.6" fill="url(#gf15)"/>
</g>
</svg>
<span class="t " id="L15_0" style="left:80px;top:341px;transform:scaleX(0.9694);">Performance</span>
<span class="t " id="L15_1" style="left:150.7px;top:341px;transform:scaleX(1.0449);">Monitor</span>
<span class="t " id="L15_2" style="left:196.5px;top:341px;transform:scaleX(0.9061);">Users</span>
<div class="hd" style="left:50px;top:368px;width:9px"></div>
<svg class="ic" style="left:59px;top:358px" width="16" height="16" viewBox="0 0 16 16">
<defs><linearGradient id="gb16" x1="0" y1="0" x2="0" y2="1"><stop offset="0" stop-color="#b9dbf9"/><stop offset="0.5" stop-color="#72b2ed"/><stop offset="1" stop-color="#3a80cc"/></linearGradient>
<linearGradient id="gg16" x1="0" y1="0" x2="0" y2="1"><stop offset="0" stop-color="#b4dc8a"/><stop offset="0.55" stop-color="#7dba4c"/><stop offset="1" stop-color="#4d8f26"/></linearGradient>
<linearGradient id="gh16" x1="0" y1="0" x2="0" y2="1"><stop offset="0" stop-color="#6e3709"/><stop offset="1" stop-color="#a8641f"/></linearGradient>
<radialGradient id="gf16" cx="0.4" cy="0.35" r="0.7"><stop offset="0" stop-color="#fdeec0"/><stop offset="1" stop-color="#d9a45c"/></radialGradient></defs>
<g transform="translate(6.6 1.0)">
<path d="M0.5 8.5 Q0.5 7.8 1.3 7.8 L8.2 7.8 Q9 7.8 9 8.5 L9 11.5 Q9 12.5 8 12.5 L1.5 12.5 Q0.5 12.5 0.5 11.5 Z" fill="url(#gg16)" stroke="#3f7f22" stroke-width="1"/>
<path d="M2.5 7.9 L7.1 7.9 L4.8 10.4 Z" fill="#f6fbff"/>
<path d="M3.8 5.6 L5.8 5.6 L5.8 8.3 L4.8 9.3 L3.8 8.3 Z" fill="#d9a55e"/>
<rect x="2" y="0" width="5.7" height="6.2" rx="2.5" ry="2.7" fill="url(#gh16)"/>
<ellipse cx="4.8" cy="5.0" rx="1.95" ry="2.6" fill="url(#gf16)"/>
</g>
<g transform="translate(0.0 3.0)">
<path d="M0.5 8.5 Q0.5 7.8 1.3 7.8 L8.2 7.8 Q9 7.8 9 8.5 L9 11.5 Q9 12.5 8 12.5 L1.5 12.5 Q0.5 12.5 0.5 11.5 Z" fill="url(#gb16)" stroke="#2562ae" stroke-width="1"/>
<path d="M2.5 7.9 L7.1 7.9 L4.8 10.4 Z" fill="#f6fbff"/>
<path d="M3.8 5.6 L5.8 5.6 L5.8 8.3 L4.8 9.3 L3.8 8.3 Z" fill="#d9a55e"/>
<rect x="2" y="0" width="5.7" height="6.2" rx="2.5" ry="2.7" fill="url(#gh16)"/>
<ellipse cx="4.8" cy="5.0" rx="1.95" ry="2.6" fill="url(#gf16)"/>
</g>
</svg>
<span class="t " id="L16_0" style="left:80px;top:359px;transform:scaleX(0.9084);">Power</span>
<span class="t " id="L16_1" style="left:115.5px;top:359px;transform:scaleX(0.9061);">Users</span>
<div class="hd" style="left:50px;top:386px;width:9px"></div>
<svg class="ic" style="left:59px;top:376px" width="16" height="16" viewBox="0 0 16 16">
<defs><linearGradient id="gb17" x1="0" y1="0" x2="0" y2="1"><stop offset="0" stop-color="#b9dbf9"/><stop offset="0.5" stop-color="#72b2ed"/><stop offset="1" stop-color="#3a80cc"/></linearGradient>
<linearGradient id="gg17" x1="0" y1="0" x2="0" y2="1"><stop offset="0" stop-color="#b4dc8a"/><stop offset="0.55" stop-color="#7dba4c"/><stop offset="1" stop-color="#4d8f26"/></linearGradient>
<linearGradient id="gh17" x1="0" y1="0" x2="0" y2="1"><stop offset="0" stop-color="#6e3709"/><stop offset="1" stop-color="#a8641f"/></linearGradient>
<radialGradient id="gf17" cx="0.4" cy="0.35" r="0.7"><stop offset="0" stop-color="#fdeec0"/><stop offset="1" stop-color="#d9a45c"/></radialGradient></defs>
<g transform="translate(6.6 1.0)">
<path d="M0.5 8.5 Q0.5 7.8 1.3 7.8 L8.2 7.8 Q9 7.8 9 8.5 L9 11.5 Q9 12.5 8 12.5 L1.5 12.5 Q0.5 12.5 0.5 11.5 Z" fill="url(#gg17)" stroke="#3f7f22" stroke-width="1"/>
<path d="M2.5 7.9 L7.1 7.9 L4.8 10.4 Z" fill="#f6fbff"/>
<path d="M3.8 5.6 L5.8 5.6 L5.8 8.3 L4.8 9.3 L3.8 8.3 Z" fill="#d9a55e"/>
<rect x="2" y="0" width="5.7" height="6.2" rx="2.5" ry="2.7" fill="url(#gh17)"/>
<ellipse cx="4.8" cy="5.0" rx="1.95" ry="2.6" fill="url(#gf17)"/>
</g>
<g transform="translate(0.0 3.0)">
<path d="M0.5 8.5 Q0.5 7.8 1.3 7.8 L8.2 7.8 Q9 7.8 9 8.5 L9 11.5 Q9 12.5 8 12.5 L1.5 12.5 Q0.5 12.5 0.5 11.5 Z" fill="url(#gb17)" stroke="#2562ae" stroke-width="1"/>
<path d="M2.5 7.9 L7.1 7.9 L4.8 10.4 Z" fill="#f6fbff"/>
<path d="M3.8 5.6 L5.8 5.6 L5.8 8.3 L4.8 9.3 L3.8 8.3 Z" fill="#d9a55e"/>
<rect x="2" y="0" width="5.7" height="6.2" rx="2.5" ry="2.7" fill="url(#gh17)"/>
<ellipse cx="4.8" cy="5.0" rx="1.95" ry="2.6" fill="url(#gf17)"/>
</g>
</svg>
<span class="t " id="L17_0" style="left:80px;top:377px;transform:scaleX(0.9326);">Remote</span>
<span class="t " id="L17_1" style="left:123.8px;top:377px;transform:scaleX(0.9562);">Desktop</span>
<span class="t " id="L17_2" style="left:169.9px;top:377px;transform:scaleX(0.8968);">Users</span>
<div class="hd" style="left:50px;top:404px;width:9px"></div>
<svg class="ic" style="left:59px;top:394px" width="16" height="16" viewBox="0 0 16 16">
<defs><linearGradient id="gb18" x1="0" y1="0" x2="0" y2="1"><stop offset="0" stop-color="#b9dbf9"/><stop offset="0.5" stop-color="#72b2ed"/><stop offset="1" stop-color="#3a80cc"/></linearGradient>
<linearGradient id="gg18" x1="0" y1="0" x2="0" y2="1"><stop offset="0" stop-color="#b4dc8a"/><stop offset="0.55" stop-color="#7dba4c"/><stop offset="1" stop-color="#4d8f26"/></linearGradient>
<linearGradient id="gh18" x1="0" y1="0" x2="0" y2="1"><stop offset="0" stop-color="#6e3709"/><stop offset="1" stop-color="#a8641f"/></linearGradient>
<radialGradient id="gf18" cx="0.4" cy="0.35" r="0.7"><stop offset="0" stop-color="#fdeec0"/><stop offset="1" stop-color="#d9a45c"/></radialGradient></defs>
<g transform="translate(6.6 1.0)">
<path d="M0.5 8.5 Q0.5 7.8 1.3 7.8 L8.2 7.8 Q9 7.8 9 8.5 L9 11.5 Q9 12.5 8 12.5 L1.5 12.5 Q0.5 12.5 0.5 11.5 Z" fill="url(#gg18)" stroke="#3f7f22" stroke-width="1"/>
<path d="M2.5 7.9 L7.1 7.9 L4.8 10.4 Z" fill="#f6fbff"/>
<path d="M3.8 5.6 L5.8 5.6 L5.8 8.3 L4.8 9.3 L3.8 8.3 Z" fill="#d9a55e"/>
<rect x="2" y="0" width="5.7" height="6.2" rx="2.5" ry="2.7" fill="url(#gh18)"/>
<ellipse cx="4.8" cy="5.0" rx="1.95" ry="2.6" fill="url(#gf18)"/>
</g>
<g transform="translate(0.0 3.0)">
<path d="M0.5 8.5 Q0.5 7.8 1.3 7.8 L8.2 7.8 Q9 7.8 9 8.5 L9 11.5 Q9 12.5 8 12.5 L1.5 12.5 Q0.5 12.5 0.5 11.5 Z" fill="url(#gb18)" stroke="#2562ae" stroke-width="1"/>
<path d="M2.5 7.9 L7.1 7.9 L4.8 10.4 Z" fill="#f6fbff"/>
<path d="M3.8 5.6 L5.8 5.6 L5.8 8.3 L4.8 9.3 L3.8 8.3 Z" fill="#d9a55e"/>
<rect x="2" y="0" width="5.7" height="6.2" rx="2.5" ry="2.7" fill="url(#gh18)"/>
<ellipse cx="4.8" cy="5.0" rx="1.95" ry="2.6" fill="url(#gf18)"/>
</g>
</svg>
<span class="t " id="L18" style="left:80px;top:395px;transform:scaleX(0.9791);">Replicator</span>
<div class="hd" style="left:50px;top:422px;width:9px"></div>
<svg class="ic" style="left:59px;top:412px" width="16" height="16" viewBox="0 0 16 16">
<defs><linearGradient id="gb19" x1="0" y1="0" x2="0" y2="1"><stop offset="0" stop-color="#b9dbf9"/><stop offset="0.5" stop-color="#72b2ed"/><stop offset="1" stop-color="#3a80cc"/></linearGradient>
<linearGradient id="gg19" x1="0" y1="0" x2="0" y2="1"><stop offset="0" stop-color="#b4dc8a"/><stop offset="0.55" stop-color="#7dba4c"/><stop offset="1" stop-color="#4d8f26"/></linearGradient>
<linearGradient id="gh19" x1="0" y1="0" x2="0" y2="1"><stop offset="0" stop-color="#6e3709"/><stop offset="1" stop-color="#a8641f"/></linearGradient>
<radialGradient id="gf19" cx="0.4" cy="0.35" r="0.7"><stop offset="0" stop-color="#fdeec0"/><stop offset="1" stop-color="#d9a45c"/></radialGradient></defs>
<g transform="translate(6.6 1.0)">
<path d="M0.5 8.5 Q0.5 7.8 1.3 7.8 L8.2 7.8 Q9 7.8 9 8.5 L9 11.5 Q9 12.5 8 12.5 L1.5 12.5 Q0.5 12.5 0.5 11.5 Z" fill="url(#gg19)" stroke="#3f7f22" stroke-width="1"/>
<path d="M2.5 7.9 L7.1 7.9 L4.8 10.4 Z" fill="#f6fbff"/>
<path d="M3.8 5.6 L5.8 5.6 L5.8 8.3 L4.8 9.3 L3.8 8.3 Z" fill="#d9a55e"/>
<rect x="2" y="0" width="5.7" height="6.2" rx="2.5" ry="2.7" fill="url(#gh19)"/>
<ellipse cx="4.8" cy="5.0" rx="1.95" ry="2.6" fill="url(#gf19)"/>
</g>
<g transform="translate(0.0 3.0)">
<path d="M0.5 8.5 Q0.5 7.8 1.3 7.8 L8.2 7.8 Q9 7.8 9 8.5 L9 11.5 Q9 12.5 8 12.5 L1.5 12.5 Q0.5 12.5 0.5 11.5 Z" fill="url(#gb19)" stroke="#2562ae" stroke-width="1"/>
<path d="M2.5 7.9 L7.1 7.9 L4.8 10.4 Z" fill="#f6fbff"/>
<path d="M3.8 5.6 L5.8 5.6 L5.8 8.3 L4.8 9.3 L3.8 8.3 Z" fill="#d9a55e"/>
<rect x="2" y="0" width="5.7" height="6.2" rx="2.5" ry="2.7" fill="url(#gh19)"/>
<ellipse cx="4.8" cy="5.0" rx="1.95" ry="2.6" fill="url(#gf19)"/>
</g>
</svg>
<span class="t " id="L19" style="left:80px;top:413px;transform:scaleX(0.8806);">Users</span>
<div class="vd" style="left:429px;top:82px;height:35px"></div>
<div class="hd" style="left:431px;top:80px;width:9px"></div>
<div class="cb" style="left:440px;top:72px"><b></b><svg class="ic" style="left:0;top:0" width="11" height="11" viewBox="0 0 11 11"><path d="M1.5 6.2 L2.9 4.9 L4.6 7.3 L8.3 0.9 L9.7 1.6 L4.9 9.9 Z" fill="#3a488e"/></svg></div>
<svg class="ic" style="left:453px;top:71px" width="16" height="16" viewBox="0 0 16 16">
<defs><linearGradient id="sv0" x1="0" y1="0" x2="1" y2="0"><stop offset="0" stop-color="#c3d0dd"/><stop offset="0.45" stop-color="#eaf0f6"/><stop offset="1" stop-color="#bccad9"/></linearGradient></defs>
<path d="M3.5 1.8 Q3.5 0.5 4.8 0.5 L10.2 0.5 Q11.5 0.5 11.5 1.8 L11.5 15.5 L3.5 15.5 Z" fill="url(#sv0)" stroke="#75838f" stroke-width="1"/>
<rect x="3" y="14" width="9" height="2" fill="#687684"/>
<rect x="5" y="3" width="5" height="1" fill="#b3c0cf"/>
<rect x="5" y="5" width="5" height="1" fill="#8193a8"/>
<rect x="5" y="7" width="5" height="1" fill="#8193a8"/>
<rect x="5" y="9" width="5" height="1" fill="#90a1b5"/>
<rect x="7.5" y="10.6" width="3" height="1.8" fill="#cfe6cf"/>
<rect x="8" y="11" width="2" height="1" fill="#2f8a35"/>
</svg>
<div class="sel" style="left:472px;top:70px;width:104px;height:18px"></div>
<span class="t " id="R0_0" style="left:474px;top:71px;transform:scaleX(0.7797);">US1</span>
<span class="t " id="R0_1" style="left:497.3px;top:71px;transform:scaleX(0.9029);">( 192.168.2.12 )</span>
<div class="hd" style="left:431px;top:98px;width:9px"></div>
<div class="cb" style="left:440px;top:90px"><b></b><svg class="ic" style="left:0;top:0" width="11" height="11" viewBox="0 0 11 11"><path d="M1.5 6.2 L2.9 4.9 L4.6 7.3 L8.3 0.9 L9.7 1.6 L4.9 9.9 Z" fill="#3a488e"/></svg></div>
<svg class="ic" style="left:453px;top:89px" width="16" height="16" viewBox="0 0 16 16">
<defs><linearGradient id="sv1" x1="0" y1="0" x2="1" y2="0"><stop offset="0" stop-color="#c3d0dd"/><stop offset="0.45" stop-color="#eaf0f6"/><stop offset="1" stop-color="#bccad9"/></linearGradient></defs>
<path d="M3.5 1.8 Q3.5 0.5 4.8 0.5 L10.2 0.5 Q11.5 0.5 11.5 1.8 L11.5 15.5 L3.5 15.5 Z" fill="url(#sv1)" stroke="#75838f" stroke-width="1"/>
<rect x="3" y="14" width="9" height="2" fill="#687684"/>
<rect x="5" y="3" width="5" height="1" fill="#b3c0cf"/>
<rect x="5" y="5" width="5" height="1" fill="#8193a8"/>
<rect x="5" y="7" width="5" height="1" fill="#8193a8"/>
<rect x="5" y="9" width="5" height="1" fill="#90a1b5"/>
<rect x="7.5" y="10.6" width="3" height="1.8" fill="#cfe6cf"/>
<rect x="8" y="11" width="2" height="1" fill="#2f8a35"/>
</svg>
<span class="t " id="R1_0" style="left:474px;top:89px;transform:scaleX(0.8850);">SAP Server</span>
<span class="t " id="R1_1" style="left:533.0px;top:89px;transform:scaleX(0.9028);">( 192.168.1.44 )</span>
<div class="hd" style="left:431px;top:116px;width:9px"></div>
<div class="cb" style="left:440px;top:108px"><b></b></div>
<svg class="ic" style="left:453px;top:107px" width="16" height="16" viewBox="0 0 16 16">
<defs><linearGradient id="sv2" x1="0" y1="0" x2="1" y2="0"><stop offset="0" stop-color="#c3d0dd"/><stop offset="0.45" stop-color="#eaf0f6"/><stop offset="1" stop-color="#bccad9"/></linearGradient></defs>
<path d="M3.5 1.8 Q3.5 0.5 4.8 0.5 L10.2 0.5 Q11.5 0.5 11.5 1.8 L11.5 15.5 L3.5 15.5 Z" fill="url(#sv2)" stroke="#75838f" stroke-width="1"/>
<rect x="3" y="14" width="9" height="2" fill="#687684"/>
<rect x="5" y="3" width="5" height="1" fill="#b3c0cf"/>
<rect x="5" y="5" width="5" height="1" fill="#8193a8"/>
<rect x="5" y="7" width="5" height="1" fill="#8193a8"/>
<rect x="5" y="9" width="5" height="1" fill="#90a1b5"/>
<rect x="7.5" y="10.6" width="3" height="1.8" fill="#cfe6cf"/>
<rect x="8" y="11" width="2" height="1" fill="#2f8a35"/>
</svg>
<span class="t " id="R2_0" style="left:474px;top:107px;transform:scaleX(0.9571);">Headquarters</span>
<span class="t " id="R2_1" style="left:547.8px;top:107px;transform:scaleX(0.9064);">( 192.158.1.23 )</span>
<div id="btn"><div class="in"></div><div class="in2"></div></div>
<svg class="ic" style="left:54px;top:535px" width="32" height="32" viewBox="0 0 32 32">
<defs><linearGradient id="bs" x1="0" y1="0" x2="1" y2="0"><stop offset="0" stop-color="#b9cbe0"/><stop offset="0.35" stop-color="#e6eef7"/><stop offset="1" stop-color="#b4c6dc"/></linearGradient>
<radialGradient id="bp" cx="0.4" cy="0.3" r="0.8"><stop offset="0" stop-color="#9ad438"/><stop offset="1" stop-color="#4c9a10"/></radialGradient>
<pattern id="ck" x="0" y="0" width="2" height="2" patternUnits="userSpaceOnUse"><rect width="2" height="2" fill="#fff"/><rect width="1" height="1" fill="#a9bdd6"/><rect x="1" y="1" width="1" height="1" fill="#a9bdd6"/></pattern></defs>
<path d="M3.5 4 L5.5 1.5 L17.5 1.5 L19.5 4 L19.5 28.5 L3.5 28.5 Z" fill="url(#bs)" stroke="#8093ab" stroke-width="1"/>
<rect x="5" y="2" width="13" height="1.5" fill="#d5e1ee"/>
<rect x="3" y="28" width="17" height="1" fill="#6f8298"/>
<g>
<rect x="5.5" y="6" width="12.5" height="1" fill="#fff"/><rect x="5.5" y="7" width="12.5" height="2" fill="#7f9fc6"/><rect x="5.5" y="9" width="12.5" height="1" fill="#b7cbe2"/>
<rect x="5.5" y="10" width="12.5" height="1" fill="#fff"/><rect x="5.5" y="11" width="12.5" height="2" fill="#7f9fc6"/><rect x="5.5" y="13" width="12.5" height="1" fill="#b7cbe2"/>
<rect x="5.5" y="14" width="12.5" height="1" fill="#fff"/><rect x="5.5" y="15" width="12.5" height="2" fill="#7f9fc6"/><rect x="5.5" y="17" width="12.5" height="1" fill="#b7cbe2"/>
<rect x="5.5" y="18" width="12.5" height="1" fill="#fff"/><rect x="5.5" y="19" width="12.5" height="2" fill="#8fabce"/>
</g>
<rect x="12.5" y="22" width="2" height="1" fill="#44566c"/>
<rect x="5.5" y="24" width="10" height="4" fill="url(#ck)"/>
<circle cx="22.2" cy="24.1" r="6.5" fill="url(#bp)" stroke="#4a8f12" stroke-width="0.9"/>
<path d="M21.0 20.1 h2.4 v2.8 h2.8 v2.4 h-2.8 v2.8 h-2.4 v-2.8 h-2.8 v-2.4 h2.8 z" fill="#fdfff0"/>
</svg>
<div id="btxt" style="transform:scaleX(0.9911);">Manage Servers</div>
</body></html>
